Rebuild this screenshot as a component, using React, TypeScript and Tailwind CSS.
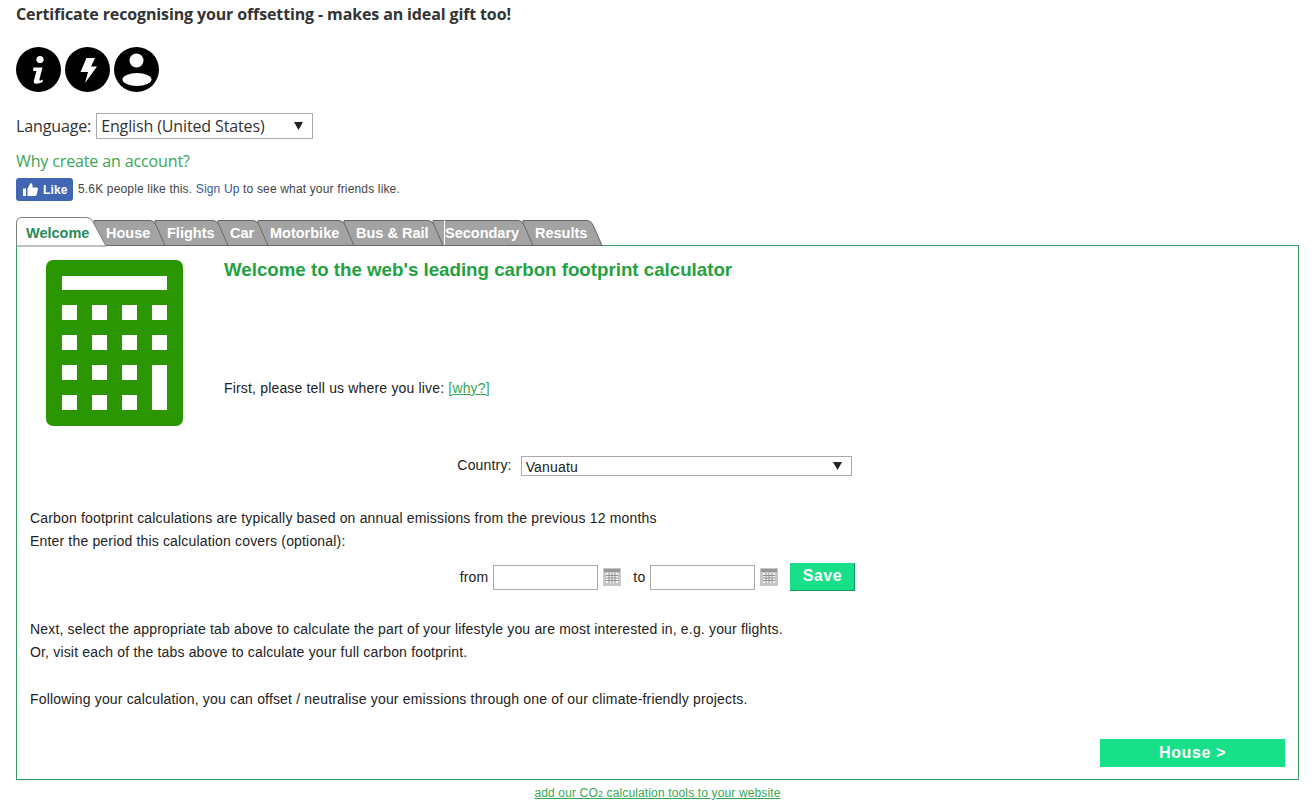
const tabs = [
  { label: "Welcome", w: 88 },
  { label: "House", w: 61 },
  { label: "Flights", w: 63 },
  { label: "Car", w: 40 },
  { label: "Motorbike", w: 86 },
  { label: "Bus & Rail", w: 89 },
  { label: "Secondary", w: 90 },
  { label: "Results", w: 69 },
];

function Tab({ label, w, index }: { label: string; w: number; index: number }) {
  const active = index === 0;
  return (
    <div
      className={`relative flex h-7 items-center pt-[6px] text-[14.5px] font-bold ${active ? "text-[#2b8a57]" : "text-white"}`}
      style={{ width: w, zIndex: 20 - index }}
    >
      <svg className="absolute left-0 top-0 overflow-visible" width={w} height={29}>
        {active ? (
          <path
            d={`M0.5 29 V6 Q0.5 0.5 6 0.5 H${w - 17} Q${w - 13} 0.5 ${w - 11} 5 L${w + 2} 29 Z`}
            fill="#ffffff"
            stroke="#808080"
            strokeWidth="1"
          />
        ) : (
          <path
            d={`M-10 28.5 V3.5 H${w - 15} Q${w - 11} 3.5 ${w - 9} 8 L${w} 28.5 Z`}
            fill="#a3a3a3"
            stroke="#666666"
            strokeWidth="1"
          />
        )}
        {/* the odd white seam in front of Secondary */}
        {label === "Secondary" && <path d="M1.5 3V28" stroke="#ffffff" strokeWidth="1" />}
      </svg>
      <span className={`relative ${active ? "ml-[10px]" : "ml-[2px]"}`}>{label}</span>
    </div>
  );
}

function CalIcon() {
  return (
    <svg width="18" height="18" viewBox="0 0 18 18" className="shrink-0">
      <rect x="0" y="0" width="18" height="18" rx="1" fill="#c6c6c6" />
      <rect x="1" y="1" width="16" height="3" fill="#979797" />
      <rect x="3" y="5" width="12" height="10" fill="#f4f4f4" />
      <path d="M3 7.5H15M3 10H15M3 12.5H15M6 5V15M9 5V15M12 5V15" stroke="#8f8f8f" strokeWidth="1" fill="none" />
    </svg>
  );
}

function Calculator() {
  return (
    <svg width="137" height="166" viewBox="0 0 137 166" className="shrink-0">
      <rect width="137" height="166" rx="7" fill="#2a9702" />
      <rect x="16" y="16" width="105" height="14" fill="#fff" />
      {[45, 75, 105, 135].map((y) =>
        [16, 46, 76].map((x) => <rect key={`${x}-${y}`} x={x} y={y} width="15" height="15" fill="#fff" />),
      )}
      <rect x="106" y="45" width="15" height="15" fill="#fff" />
      <rect x="106" y="75" width="15" height="15" fill="#fff" />
      <rect x="106" y="105" width="15" height="45" fill="#fff" />
    </svg>
  );
}

export default function App() {
  return (
    <div className="bg-white pl-4 pr-[17px] font-['Liberation_Sans',Arial,sans-serif] text-[14px] tracking-[0.17px] text-[#222]">
      <div className="font-['Open_Sans',sans-serif] tracking-[-0.13px] text-[#333]">
        <p className="pt-[3px] text-[16px] font-bold leading-[22px]">Certificate recognising your offsetting - makes an ideal gift too!</p>

        {/* round icons */}
        <div className="mt-[22px] flex gap-1">
          <svg width="45" height="45" viewBox="0 0 45 45">
            <circle cx="22.5" cy="22.5" r="22.5" fill="#000" />
            <circle cx="24" cy="12.5" r="3.6" fill="#fff" />
            <path d="M17.5 20.5 H26.5 L23.5 32 Q23 34 25 33.5 L27 32.5 L26.5 35 Q23 37 20 36.8 Q17 36.5 18 33 L20.5 24 H17 Z" fill="#fff" />
          </svg>
          <svg width="45" height="45" viewBox="0 0 45 45">
            <circle cx="22.5" cy="22.5" r="22.5" fill="#000" />
            <path d="M21.5 11 H30 L26 19.5 H32 L20 36 L23 25 H15.5 Z" fill="#fff" />
          </svg>
          <svg width="45" height="45" viewBox="0 0 45 45">
            <circle cx="22.5" cy="22.5" r="22.5" fill="#000" />
            <circle cx="22.5" cy="13.5" r="7" fill="#fff" />
            <ellipse cx="23" cy="32.5" rx="14.5" ry="6.5" fill="#fff" />
          </svg>
        </div>

        <div className="mt-[21px] flex items-center gap-[5px] text-[16px]">
          <span>Language:</span>
          <div className="relative">
            <select className="block h-[26px] w-[217px] appearance-none border border-[#a9a9a9] bg-white pl-1 text-[16px] tracking-[-0.13px] text-[#333]">
              <option>English (United States)</option>
            </select>
            <svg className="absolute right-[10px] top-[9px]" width="9" height="8" viewBox="0 0 9 8">
              <path d="M0 0H9L4.5 8Z" fill="#222" />
            </svg>
          </div>
        </div>

        <a className="mt-[11px] block text-[16px] leading-[22px] text-[#3aa655]">Why create an account?</a>
      </div>

      {/* facebook like */}
      <div className="mt-[6px] flex items-center gap-[5px] text-[12px] tracking-[0.16px] text-[#444]">
        <div className="flex h-[23px] w-[57px] items-center gap-[5px] rounded-[3px] bg-[#4267b2] pl-[7px] text-[12px] font-bold text-white">
          <svg width="15" height="13" viewBox="0 0 15 13">
            <path d="M0 5.5H3V13H0ZM4.5 5.5 7.5 0Q9.5 0 9.5 2.5V4.5H14Q15 4.5 15 6L13.5 12Q13 13 12 13H4.5Z" fill="#fff" />
          </svg>
          Like
        </div>
        <span className="pb-[2px]">
          5.6K people like this. <a className="text-[#365899]">Sign Up</a> to see what your friends like.
        </span>
      </div>

      {/* tabs */}
      <div className="relative z-10 mt-4 flex h-7 tracking-normal">
        {tabs.map((t, i) => (
          <Tab key={t.label} label={t.label} w={t.w} index={i} />
        ))}
      </div>

      <div className="border border-[#3a9a68] px-[13px] pb-3 pt-[13px] leading-[23px]">
        {/* intro */}
        <div className="flex">
          <div className="ml-4 mr-[41px] mt-px">
            <Calculator />
          </div>
          <div>
            <h1 className="mt-px text-[18.72px] font-bold leading-[20px] tracking-normal text-[#1fa23f]">Welcome to the web's leading carbon footprint calculator</h1>
            <p className="mt-[97px]">
              First, please tell us where you live: <a className="text-[#3aa655] underline">[why?]</a>
            </p>
          </div>
        </div>

        <div className="mt-[28px] flex items-center justify-center gap-[9px] pr-[6px]">
          <span>Country:</span>
          <div className="relative">
            <select className="block h-5 w-[331px] appearance-none border border-[#a9a9a9] bg-white pl-1 text-[14px] leading-normal tracking-[0.17px] text-[#222]">
              <option>Vanuatu</option>
            </select>
            <svg className="absolute right-[10px] top-[6px]" width="9" height="8" viewBox="0 0 9 8">
              <path d="M0 0H9L4.5 8Z" fill="#222" />
            </svg>
          </div>
        </div>

        <p className="mt-[30px]">Carbon footprint calculations are typically based on annual emissions from the previous 12 months</p>
        <p>Enter the period this calculation covers (optional):</p>

        <div className="mt-[10px] flex items-center justify-center">
          <span>from</span>
          <input className="ml-[5px] h-[25px] w-[105px] border border-[#aaa] bg-white" />
          <span className="ml-[5px]"><CalIcon /></span>
          <span className="ml-3">to</span>
          <input className="ml-[5px] h-[25px] w-[105px] border border-[#aaa] bg-white" />
          <span className="ml-[5px]"><CalIcon /></span>
          <button className="ml-[12px] h-7 w-[65px] border-b border-r border-[#0f9a63] bg-[#17e088] pb-[3px] text-[16px] font-bold tracking-[0.5px] text-white">Save</button>
        </div>

        <p className="mt-[27px]">Next, select the appropriate tab above to calculate the part of your lifestyle you are most interested in, e.g. your flights.</p>
        <p>Or, visit each of the tabs above to calculate your full carbon footprint.</p>
        <p className="mt-6">Following your calculation, you can offset / neutralise your emissions through one of our climate-friendly projects.</p>

        <div className="mt-[28px] flex justify-end">
          <button className="h-7 w-[185px] bg-[#17e088] pb-px text-[16px] font-bold tracking-[0.6px] text-white">House &gt;</button>
        </div>
      </div>

      <div className="mt-[5px] pb-[7px] text-center text-[12px] leading-4 tracking-[0.14px]">
        <a className="text-[#3aa655] underline">add our CO<span className="text-[9px]">2</span> calculation tools to your website</a>
      </div>
    </div>
  );
}
